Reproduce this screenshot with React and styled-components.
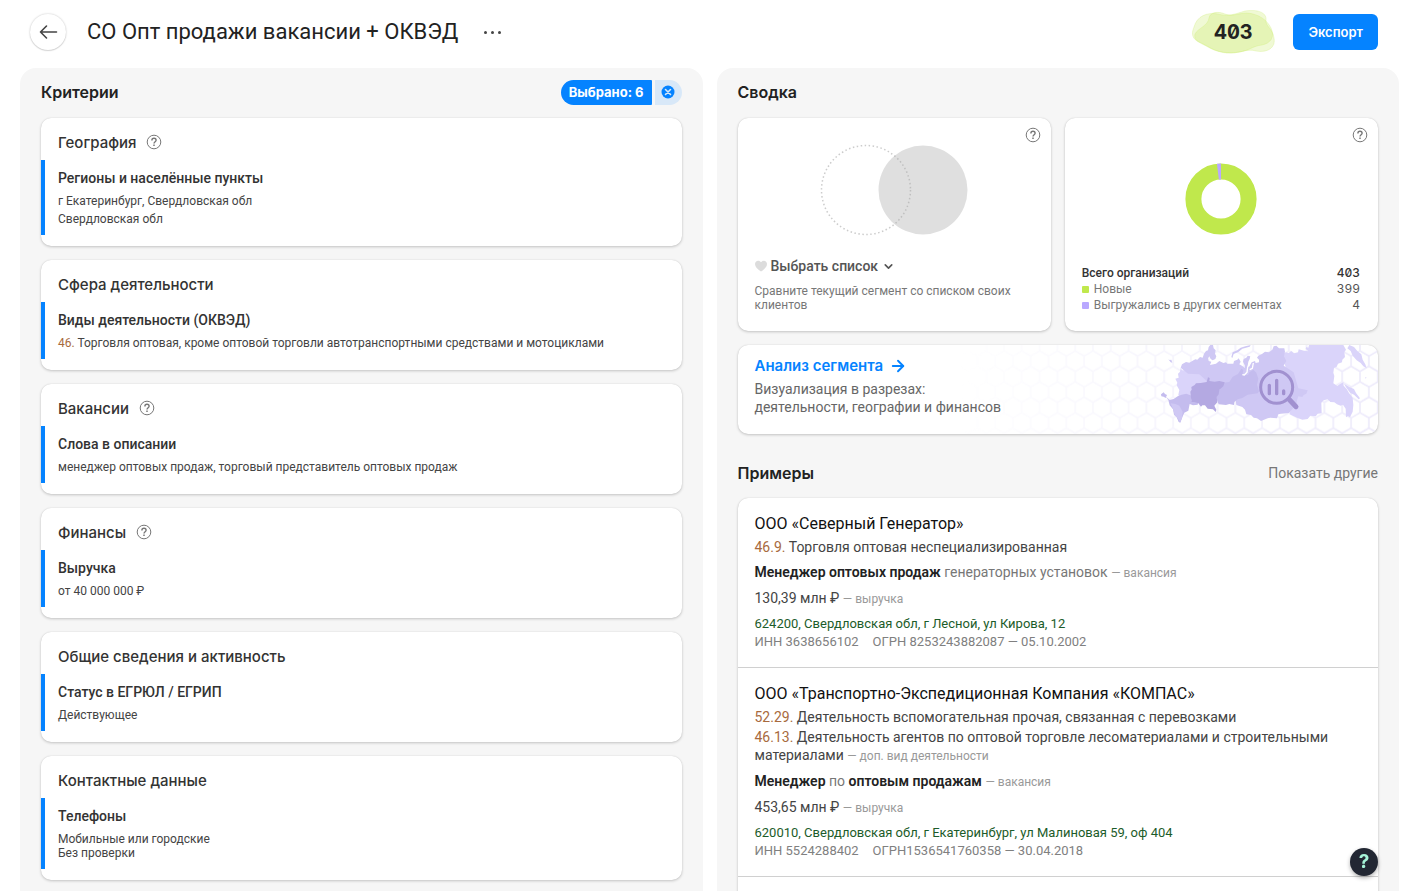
import { ArrowRight, ChevronDown } from 'lucide-react'
import React from 'react'
import styled, { createGlobalStyle } from 'styled-components'

const textFont = "Roboto, 'Liberation Sans', sans-serif"
const headingFont = "Inter, 'Liberation Sans', sans-serif"

const GlobalStyle = createGlobalStyle`
  * {
    box-sizing: border-box;
  }

  body {
    margin: 0;
    background: #fff;
    color: #333;
    font-family: ${textFont};
    font-size: 14px;
  }

  h1, h2, h3, h4, p, ul {
    margin: 0;
    padding: 0;
    font-weight: inherit;
  }

  button {
    padding: 0;
    border: 0;
    background: none;
    color: inherit;
    font: inherit;
    cursor: pointer;
  }

  a {
    color: inherit;
    text-decoration: none;
  }
`

const Page = styled.div`
  display: flex;
  flex-direction: column;
  height: 100vh;
  padding: 0 19px 2px 20px;
  overflow: hidden;
`

const Header = styled.header`
  display: flex;
  align-items: center;
  flex: none;
  height: 64px;
  margin-bottom: 4px;
  padding: 0 21px 0 10px;
`

const BackButton = styled.button`
  display: grid;
  place-items: center;
  width: 36px;
  height: 36px;
  border-radius: 50%;
  color: #444;
  box-shadow: 0 0 2px rgba(0, 0, 0, 0.25), 0 1px 1px rgba(0, 0, 0, 0.1);
`

const PageTitle = styled.h1`
  margin-left: 21px;
  color: #222;
  font-size: 22px;
  line-height: 28px;
`

const MoreButton = styled.button`
  display: flex;
  gap: 4px;
  margin-left: 26px;
  padding: 8px 0;
`

const Dot = styled.span`
  width: 3px;
  height: 3px;
  border-radius: 50%;
  background: #444;
`

const Counter = styled.div`
  position: relative;
  display: grid;
  place-items: center;
  width: 84px;
  height: 44px;
  margin-left: auto;
  color: #222;
  font-family: ${headingFont};
  font-size: 20px;
  font-weight: 700;
  font-variant-numeric: tabular-nums slashed-zero;

  svg {
    position: absolute;
    inset: 0;
  }

  span {
    position: relative;
  }
`

const ExportButton = styled.button`
  height: 36px;
  margin-left: 18px;
  padding: 0 15px;
  border-radius: 6px;
  background: #0583ff;
  color: #fff;
  font-family: ${headingFont};
  font-size: 13px;
  font-weight: 600;
`

const Columns = styled.main`
  display: grid;
  grid-template-columns: 1fr 1fr;
  flex: 1;
  gap: 14px;
  min-height: 0;
`

const Panel = styled.section`
  min-width: 0;
  padding: 0 21px;
  border-radius: 16px 16px 0 0;
  background: #f6f6f6;
  overflow: hidden;
`

const PanelHeader = styled.div`
  display: flex;
  align-items: center;
  justify-content: space-between;
  height: 48px;
  margin-bottom: 2px;
`

const PanelTitle = styled.h2`
  color: #222;
  font-family: ${headingFont};
  font-size: 16px;
  font-weight: 600;
  line-height: 20px;
`

const Chip = styled.div`
  display: flex;
  gap: 3px;
  height: 25px;
  border-radius: 13px;
  overflow: hidden;
`

const ChipLabel = styled.span`
  padding: 0 8px;
  border-radius: 0 1px 1px 0;
  background: #0583ff;
  color: #fff;
  font-family: ${headingFont};
  font-size: 13px;
  font-weight: 700;
  line-height: 25px;
`

const ChipReset = styled.button`
  display: grid;
  place-items: center;
  width: 27px;
  background: #d8e8f8;
`

const CardStack = styled.div`
  display: flex;
  flex-direction: column;
  gap: 14px;
`

const Card = styled.article`
  position: relative;
  border-radius: 10px;
  background: #fff;
  box-shadow: 0 0 1px rgba(0, 0, 0, 0.15), 0 1px 3px rgba(0, 0, 0, 0.2);
`

const CriterionCard = styled(Card)`
  padding: 10px 0 11px;
`

const CardTitle = styled.h3`
  display: flex;
  align-items: center;
  gap: 10px;
  height: 28px;
  padding-left: 17px;
  font-family: ${headingFont};
  font-size: 15px;
  font-weight: 500;
`

const Criterion = styled.div`
  margin-top: 4px;
  padding: 8px 13px 9px;
  border-left: 4px solid #0583ff;
  border-radius: 0 3px 3px 0;
`

const CriterionName = styled.h4`
  margin-bottom: 6px;
  font-size: 14px;
  font-weight: 500;
  line-height: 20px;
`

const CriterionValues = styled.div`
  display: flex;
  flex-direction: column;
  gap: ${(props) => (props.$dense ? 0 : 4)}px;
  color: #444;
  font-size: 12px;
  line-height: 14px;
`

const Code = styled.span`
  color: #a86a3d;
`

const HintButton = styled.button`
  display: block;
  height: 16px;
  color: #777;
`

const SummaryGrid = styled.div`
  display: grid;
  grid-template-columns: 1fr 1fr;
  gap: 14px;
`

const SummaryCard = styled(Card)`
  padding: 0 18px 18px 17px;

  ${HintButton} {
    position: absolute;
    top: 9px;
    right: 10px;
  }
`

const Chart = styled.div`
  display: grid;
  place-items: center;
  height: ${(props) => props.$height}px;
  padding-top: ${(props) => props.$top}px;
`

const ListPicker = styled.button`
  display: flex;
  align-items: center;
  gap: 4px;
  height: 20px;
  margin-bottom: 8px;
  color: #555;
  font-weight: 500;
`

const Note = styled.p`
  color: #777;
  font-size: 12px;
  line-height: 14px;
`

const Totals = styled.table`
  width: 100%;
  border-collapse: collapse;
  color: #777;
  font-size: 12px;
  line-height: 16px;

  th, td {
    height: 16px;
    padding: 0;
    font-weight: 400;
    text-align: left;
  }

  td {
    color: #555;
    font-family: ${headingFont};
    font-size: 12px;
    font-variant-numeric: tabular-nums slashed-zero;
    text-align: right;
  }

  thead th, thead td {
    color: #333;
    font-weight: 500;
  }
`

const Swatch = styled.span`
  display: inline-block;
  width: 7px;
  height: 7px;
  margin-right: 5px;
  border-radius: 1px;
  background: ${(props) => props.$color};
`

const Banner = styled(Card)`
  height: 89px;
  margin-top: 14px;
  padding: 11px 17px;
  overflow: hidden;
`

const BannerArt = styled.div`
  position: absolute;
  top: 0;
  right: 0;
  height: 100%;

  svg {
    display: block;
  }
`

const HexArt = styled(BannerArt)`
  mask-image: linear-gradient(to right, transparent 5%, #000 100%);
`

const BannerText = styled.div`
  position: relative;
  color: #666;
  font-size: 14px;
  line-height: 18px;
`

const BannerLink = styled.a`
  display: inline-flex;
  align-items: center;
  gap: 6px;
  height: 20px;
  margin-bottom: 4px;
  color: #0583ff;
  font-family: ${headingFont};
  font-size: 15px;
  font-weight: 600;
`

const ExamplesHeader = styled(PanelHeader)`
  height: 50px;
  margin-top: 14px;
  margin-bottom: 0;
`

const PlainButton = styled.button`
  color: #777;
`

const Company = styled.div`
  padding: 14px 17px 16px;
  border-bottom: 1px solid #d0d0d0;
`

const CompanyName = styled.h3`
  margin-bottom: 2px;
  color: #111;
  font-size: 16px;
  line-height: 24px;
`

const Line = styled.p`
  margin-bottom: ${(props) => props.$gap || 0}px;
  line-height: 18px;
  color: #444;

  b {
    color: #222;
    font-weight: 600;
  }
`

const Muted = styled.span`
  color: #777;
`

const Tag = styled.span`
  color: #999;
  font-size: 12px;
`

const Address = styled.p`
  color: #1c5c2a;
  font-size: 13px;
  line-height: 18px;
`

const Registry = styled.p`
  display: flex;
  gap: 14px;
  color: #808080;
  font-size: 13px;
  line-height: 18px;
`

const SupportButton = styled.button`
  position: fixed;
  right: 40px;
  bottom: 17px;
  width: 28px;
  height: 28px;
  border-radius: 50%;
  background: #222733;
  box-shadow: 0 2px 4px rgba(0, 0, 0, 0.3);
  color: #a6f4d8;
  font-family: ${headingFont};
  font-size: 19px;
  font-weight: 700;
  line-height: 28px;
`

function Hint() {
  return (
    <HintButton aria-label="Подсказка">
      <svg width="16" height="16" viewBox="0 0 16 16" fill="none" stroke="currentColor">
        <circle cx="8" cy="8" r="6.8" />
        <path d="M5.9 6.4c0-1.3.9-2.1 2.1-2.1s2.1.8 2.1 1.9c0 1.5-2.1 1.6-2.1 3.3" strokeWidth="1.4" />
        <path d="M8 10.6v1.5" strokeWidth="1.5" />
      </svg>
    </HintButton>
  )
}

function BackArrow() {
  return (
    <svg width="20" height="16" viewBox="0 0 20 16" fill="none" stroke="currentColor" strokeWidth="1.6" strokeLinecap="round" strokeLinejoin="round">
      <path d="M18.500 8H2.500M8.500 2l-6 6 6 6" />
    </svg>
  )
}

function Blob() {
  return (
    <svg width="84" height="44" viewBox="0 0 84 44" fill="#c6ea62" fillOpacity="0.27" stroke="#c6ea62" strokeOpacity="0.25">
      <path d="M3 17C6 6 16 2 27 4c10 3 17 0 27-3 11-2 22 1 21 9-1 6 7 9 8 18 2 10-7 15-18 13-9-3-17 3-29 2-13-1-20-8-30-12C0 27 1 22 3 17Z" />
      <path d="M18 8c1-6 9-7 16-4 8 3 13-1 22-1 12 1 20 7 24 15 4 9 0 15-9 17-9 1-12 5-22 7-12 2-24 0-32-5C10 33 2 31 4 24c3-6 13-8 14-16Z" />
    </svg>
  )
}

function VennChart() {
  return (
    <svg width="148" height="92" viewBox="0 0 148 92">
      <circle cx="103" cy="46" r="44.5" fill="#dfdfdf" />
      <circle cx="46" cy="46" r="44.5" fill="none" stroke="#aaa" strokeOpacity="0.6" strokeWidth="1.5" strokeDasharray="1.5 2.5" />
    </svg>
  )
}

function DonutChart() {
  return (
    <svg width="72" height="72" viewBox="0 0 72 72" fill="none" strokeWidth="16">
      <circle cx="36" cy="36" r="27.6" stroke="#c0e84c" />
      <path d="M32.9 8.6A27.6 27.6 0 0 1 36 8.4" stroke="#b9a8ff" />
    </svg>
  )
}

function HexGrid() {
  return (
    <svg width="440" height="89">
      <defs>
        <pattern id="hex" width="17.8" height="30.9" patternUnits="userSpaceOnUse" patternTransform="translate(422 31.7)">
          <path
            d="M0-5.1V5.1L8.9 10.3V20.5L0 25.7V36M17.8-5.1V5.1L8.9 10.3M8.9 20.5l8.9 5.2V36"
            fill="none"
            stroke="#ece9fb"
            strokeWidth="1.6"
          />
        </pattern>
      </defs>
      <rect width="440" height="89" fill="url(#hex)" />
    </svg>
  )
}

function RussiaMap() {
  return (
    <svg width="218" height="89" viewBox="300 30 654 267">
      <g fill="#dad4fa">
        <path d="M668 58l10-6 8 2 8-6 8 7 12-3 2-9 16 4 13 2-8-8 2-5 6 2 2-8h103l8 14-5 8 2 14-8 8-1 8-12 4-4 9-8 4-2 14 3 10-3 22 12 8 8-6 10-5 1 10 9 10 7 12 11 14 2 22-2 20-8 17-6-4-6 4-1-26-8-12-7 3-11-4-8-6-12-1-8-8-12 3-7 7 1 32-12 1-6 8-16-2-8 10-16 2-16-6-22-10 10-60-22-80z" />
        <path d="M868 30l14 6 10 12 12 10 4 16 8 14 4 12-10-6-8-10-12-8-12-14-6-14-10-8z" />
        <path d="M852 146l16 10 14 6 6 12 12 16-4 3-14-14-12-6-12-16z" />
        <path d="M362 98l4 8 20 1 20-4 26 14 15 14 2 12-40 10-14 32-34 8-6-14 3-14-8-14 2-8-6-12 10-3-2-12 6-6z" />
        <path d="M915 128l4-2-1 5zM946 38l4 0-1 7z" />
      </g>
      <g fill="#cfc8f4">
        <path d="M362 98l4-10 12-7 10 2 10-6 8-4 6 1 8-8 8 2 4-12 6-8 6-2 2-10 5-6h8l2 10 6 6-2 10 4 8-3 8-8 4-6-4-4-8-4 6 2 8 8 2-4 10 18-4 10-8 12 6 8-2 4 4 18 0 2-8 10-4 4-4 6 10-4 8 10 6 10 8 14 2-4 14-30 14-16 24-52-2-8-14-4 8-14-6-26-24-34-2z" />
        <path d="M545 118l8-12 2-14-6-12 2-8 8-4 4-6 8 2-2 8-4 8-2 12 4 4 8-14 10-4 2 6 10-2 0-8-6-6 4-6 12-6 8-6 12 2 10-8 4-10 8-2 8 8 16 0 2 10-3 14 7 14-8 14 30 20 14 48 28 6-4 10-8 4-4 6-12-2-4 12-2 14-12 12-10 12-24 2-8 2-4 12-20-2-8 2-20 8-12-8-10-2-8-8-14-2-4-14-8-8-18-6-3-20 10-12 30-20z" />
        <path d="M514 66l4-14 14-6 10-8 14-4 16-4-3 5-22 6-12 10-14 6-4 12z" />
        <path d="M325 73l4 2 5-1 3 9-5-1z" />
      </g>
      <path
        fill="#c4bcee"
        d="M490 143l18-2 10-16 16-8 10-16 6 4-2 12 8 4 8-1 4-8 12-8 9 9 6 18-4 18 6 20-4 6-30 4-16 10-14 4-10 8-1 9-14-3-10 3-22-2-8-20 8-22zM303 178l8-6 4 5 6 3-4 9-6-4-7-1zM316 184l14 12-2 2zM325 196l16-4 12-8 12-5 14-3 16 6 0 16 20 3-2 8-14 2-10-4-4 20-12 6-6 14-6 16-5-2-6-14-8-8-3-16-10-12z"
      />
      <path fill="#cfc8f4" d="M332 205l14 2 12 5 10 18-2 20-6 12-8-14-8-8-4-16z" />
      <path
        fill="#b4a9e2"
        d="M391 170l4-6-1-8 10-6 4-5 14-1 18-3 4-14 5 2-1 9 16 2 14-2 16 4-4 12-12 10-2 14-6 8 2 16-9 10 6 12-2 7-8-8-16-2-8-10-8 0-4 4-8-10-12-4-8 0-2-12z"
      />
      <path
        d="M574 64l-3 18-8 14-2 16-8 8-6-1M580 84l-3 16-8 4"
        fill="none"
        stroke="#fff"
        strokeWidth="4"
        strokeLinejoin="round"
      />
      <g fill="none" stroke="#a191d0" strokeLinecap="round">
        <circle cx="650" cy="157" r="48" strokeWidth="9" fill="#cfc8f4" fillOpacity="0.6" />
        <path d="M687 193l21 22" strokeWidth="15" />
        <path d="M628 151v25M650 136v40M671 168v8" strokeWidth="10" />
      </g>
    </svg>
  )
}

const criteria = [
  {
    title: 'География',
    hint: true,
    name: 'Регионы и населённые пункты',
    values: ['г Екатеринбург, Свердловская обл', 'Свердловская обл']
  },
  {
    title: 'Сфера деятельности',
    name: 'Виды деятельности (ОКВЭД)',
    code: '46.',
    values: ['Торговля оптовая, кроме оптовой торговли автотранспортными средствами и мотоциклами']
  },
  {
    title: 'Вакансии',
    hint: true,
    name: 'Слова в описании',
    values: ['менеджер оптовых продаж, торговый представитель оптовых продаж']
  },
  {
    title: 'Финансы',
    hint: true,
    name: 'Выручка',
    values: ['от 40 000 000 ₽']
  },
  {
    title: 'Общие сведения и активность',
    name: 'Статус в ЕГРЮЛ / ЕГРИП',
    values: ['Действующее']
  },
  {
    title: 'Контактные данные',
    name: 'Телефоны',
    dense: true,
    values: ['Мобильные или городские', 'Без проверки']
  }
]

function Criteria() {
  return (
    <Panel>
      <PanelHeader>
        <PanelTitle>Критерии</PanelTitle>
        <Chip>
          <ChipLabel>Выбрано: 6</ChipLabel>
          <ChipReset aria-label="Сбросить">
            <svg width="14" height="14" viewBox="0 0 14 14">
              <circle cx="7" cy="7" r="6.5" fill="#0583ff" />
              <path d="M4.5 4.5l5 5M9.5 4.5l-5 5" stroke="#d8e8f8" strokeWidth="1.6" strokeLinecap="round" />
            </svg>
          </ChipReset>
        </Chip>
      </PanelHeader>
      <CardStack>
        {criteria.map((item) => (
          <CriterionCard key={item.title}>
            <CardTitle>
              {item.title}
              {item.hint && <Hint />}
            </CardTitle>
            <Criterion>
              <CriterionName>{item.name}</CriterionName>
              <CriterionValues $dense={item.dense}>
                {item.values.map((value) => (
                  <p key={value}>
                    {item.code && <Code>{item.code} </Code>}
                    {value}
                  </p>
                ))}
              </CriterionValues>
            </Criterion>
          </CriterionCard>
        ))}
      </CardStack>
    </Panel>
  )
}

function Summary() {
  return (
    <>
      <SummaryGrid>
        <SummaryCard>
          <Hint />
          <Chart $height={138} $top={6}>
            <VennChart />
          </Chart>
          <ListPicker>
            <svg width="12" height="12" viewBox="0 0 12 12" fill="#dcdcdc">
              <path d="M6 11.6C2.500 9.300 0 7 0 4.100 0 2.100 1.400.7 3.200.7 4.400.7 5.400 1.300 6 2.200 6.600 1.300 7.600.7 8.800.7 10.600.7 12 2.100 12 4.100 12 7 9.500 9.300 6 11.600Z" />
            </svg>
            Выбрать список
            <ChevronDown size={13} strokeWidth={3} />
          </ListPicker>
          <Note>Сравните текущий сегмент со списком своих клиентов</Note>
        </SummaryCard>
        <SummaryCard>
          <Hint />
          <Chart $height={147} $top={15}>
            <DonutChart />
          </Chart>
          <Totals>
            <thead>
              <tr>
                <th scope="row">Всего организаций</th>
                <td>403</td>
              </tr>
            </thead>
            <tbody>
              <tr>
                <th scope="row">
                  <Swatch $color="#c0e84c" />
                  Новые
                </th>
                <td>399</td>
              </tr>
              <tr>
                <th scope="row">
                  <Swatch $color="#b9a8ff" />
                  Выгружались в других сегментах
                </th>
                <td>4</td>
              </tr>
            </tbody>
          </Totals>
        </SummaryCard>
      </SummaryGrid>
      <Banner>
        <HexArt>
          <HexGrid />
        </HexArt>
        <BannerArt>
          <RussiaMap />
        </BannerArt>
        <BannerText>
          <BannerLink href="#analysis">
            Анализ сегмента
            <ArrowRight size={18} strokeWidth={2.5} />
          </BannerLink>
          <p>Визуализация в разрезах:</p>
          <p>деятельности, географии и финансов</p>
        </BannerText>
      </Banner>
    </>
  )
}

function Examples() {
  return (
    <>
      <ExamplesHeader>
        <PanelTitle>Примеры</PanelTitle>
        <PlainButton>Показать другие</PlainButton>
      </ExamplesHeader>
      <Card>
        <Company>
          <CompanyName>
            <a href="#north">ООО «Северный Генератор»</a>
          </CompanyName>
          <Line $gap={7}>
            <Code>46.9.</Code> Торговля оптовая неспециализированная
          </Line>
          <Line $gap={7}>
            <b>Менеджер оптовых продаж</b> <Muted>генераторных установок</Muted> <Tag>— вакансия</Tag>
          </Line>
          <Line $gap={7}>
            130,39 млн ₽ <Tag>— выручка</Tag>
          </Line>
          <Address>624200, Свердловская обл, г Лесной, ул Кирова, 12</Address>
          <Registry>
            <span>ИНН 3638656102</span>
            <span>ОГРН 8253243882087 — 05.10.2002</span>
          </Registry>
        </Company>
        <Company>
          <CompanyName>
            <a href="#kompas">ООО «Транспортно-Экспедиционная Компания «КОМПАС»</a>
          </CompanyName>
          <Line $gap={2}>
            <Code>52.29.</Code> Деятельность вспомогательная прочая, связанная с перевозками
          </Line>
          <Line $gap={7}>
            <Code>46.13.</Code> Деятельность агентов по оптовой торговле лесоматериалами и строительными материалами{' '}
            <Tag>— доп. вид деятельности</Tag>
          </Line>
          <Line $gap={7}>
            <b>Менеджер</b> <Muted>по</Muted> <b>оптовым продажам</b> <Tag>— вакансия</Tag>
          </Line>
          <Line $gap={7}>
            453,65 млн ₽ <Tag>— выручка</Tag>
          </Line>
          <Address>620010, Свердловская обл, г Екатеринбург, ул Малиновая 59, оф 404</Address>
          <Registry>
            <span>ИНН 5524288402</span>
            <span>ОГРН1536541760358 — 30.04.2018</span>
          </Registry>
        </Company>
        <Company />
      </Card>
    </>
  )
}

export default function App() {
  return (
    <>
      <GlobalStyle />
      <Page>
        <Header>
          <BackButton aria-label="Назад">
            <BackArrow />
          </BackButton>
          <PageTitle>СО Опт продажи вакансии + ОКВЭД</PageTitle>
          <MoreButton aria-label="Ещё">
            <Dot />
            <Dot />
            <Dot />
          </MoreButton>
          <Counter>
            <Blob />
            <span>403</span>
          </Counter>
          <ExportButton>Экспорт</ExportButton>
        </Header>
        <Columns>
          <Criteria />
          <Panel>
            <PanelHeader>
              <PanelTitle>Сводка</PanelTitle>
            </PanelHeader>
            <Summary />
            <Examples />
          </Panel>
        </Columns>
      </Page>
      <SupportButton aria-label="Помощь">?</SupportButton>
    </>
  )
}
